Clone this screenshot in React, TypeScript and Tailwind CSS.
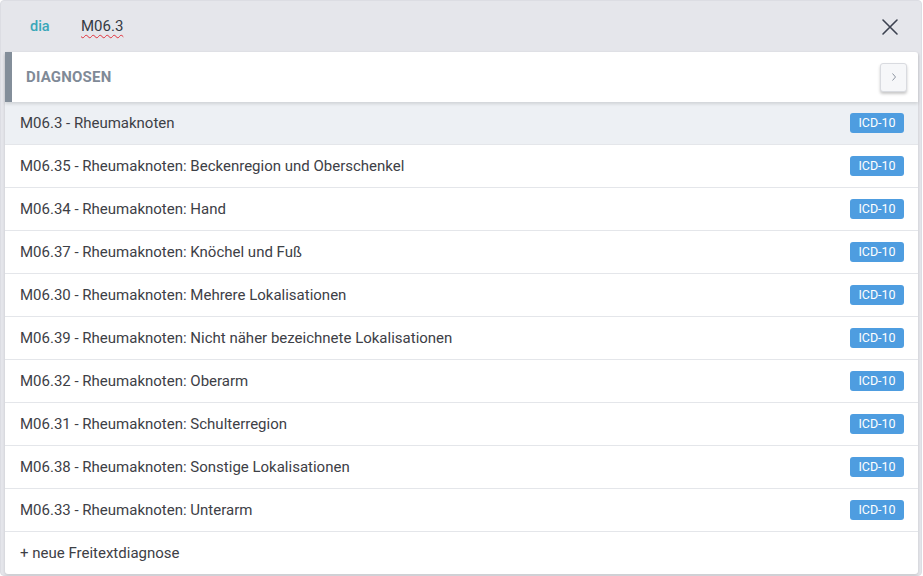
import React from 'react';

const items = [
  'M06.3 - Rheumaknoten',
  'M06.35 - Rheumaknoten: Beckenregion und Oberschenkel',
  'M06.34 - Rheumaknoten: Hand',
  'M06.37 - Rheumaknoten: Knöchel und Fuß',
  'M06.30 - Rheumaknoten: Mehrere Lokalisationen',
  'M06.39 - Rheumaknoten: Nicht näher bezeichnete Lokalisationen',
  'M06.32 - Rheumaknoten: Oberarm',
  'M06.31 - Rheumaknoten: Schulterregion',
  'M06.38 - Rheumaknoten: Sonstige Lokalisationen',
  'M06.33 - Rheumaknoten: Unterarm',
];

export default function App() {
  return (
    <div className="w-[923px] h-[576px] bg-white font-['Roboto',sans-serif]">
      <div className="w-[922px] h-[576px] bg-[#e5e6eb] border border-[#dcdde3] rounded-[4px] flex flex-col">
        {/* Search bar */}
        <div className="h-[51px] flex items-center pl-[29px] pr-[22px] shrink-0">
          <span className="text-[14.5px] font-medium text-[#3aa7b9] w-[51px]">dia</span>
          <span className="text-[15px] text-[#333a44] underline decoration-wavy decoration-[#e0303a] decoration-1 underline-offset-[3px]">
            M06.3
          </span>
          <div className="flex-1" />
          <svg width="18" height="18" viewBox="0 0 18 18" className="text-[#3c4250]">
            <path d="M2 2L16 16M16 2L2 16" stroke="currentColor" strokeWidth="1.6" strokeLinecap="round" />
          </svg>
        </div>

        {/* Results card */}
        <div className="ml-[4px] mr-[3px] bg-white rounded-[3px] shadow-[0_1px_3px_rgba(0,0,0,0.15)] flex flex-col">
          <div className="h-[50px] flex items-center border-l-[7px] border-[#838e9a] shadow-[0_2px_3px_rgba(0,0,0,0.12)] relative z-10 pr-[11px]">
            <span className="pl-[14px] text-[15px] font-bold text-[#7f8a97] tracking-[0.2px]">DIAGNOSEN</span>
            <div className="flex-1" />
            <button className="w-[27px] h-[29px] rounded-[3px] border border-[#d9dbe0] bg-[#f6f7f9] shadow-[0_2px_3px_rgba(0,0,0,0.22)] flex items-center justify-center">
              <svg width="8" height="10" viewBox="0 0 8 10">
                <path d="M2.5 1.5L5.5 5L2.5 8.5" fill="none" stroke="#8d95a1" strokeWidth="1" />
              </svg>
            </button>
          </div>
          {items.map((t, i) => (
            <div
              key={t}
              className={`h-[43px] flex items-center pl-[15px] pr-[14px] border-b border-[#e4e6ea] ${i === 0 ? 'bg-[#edf0f4]' : 'bg-white'}`}
            >
              <span className="text-[15px] text-[#3d4046]">{t}</span>
              <div className="flex-1" />
              <span className="h-[20px] w-[54px] rounded-[3px] bg-[#4e9de0] text-white text-[12.5px] flex items-center justify-center">
                ICD-10
              </span>
            </div>
          ))}
          <div className="h-[42px] flex items-center pl-[15px]">
            <span className="text-[15px] text-[#3d4046]">+ neue Freitextdiagnose</span>
          </div>
        </div>
      </div>
    </div>
  );
}
